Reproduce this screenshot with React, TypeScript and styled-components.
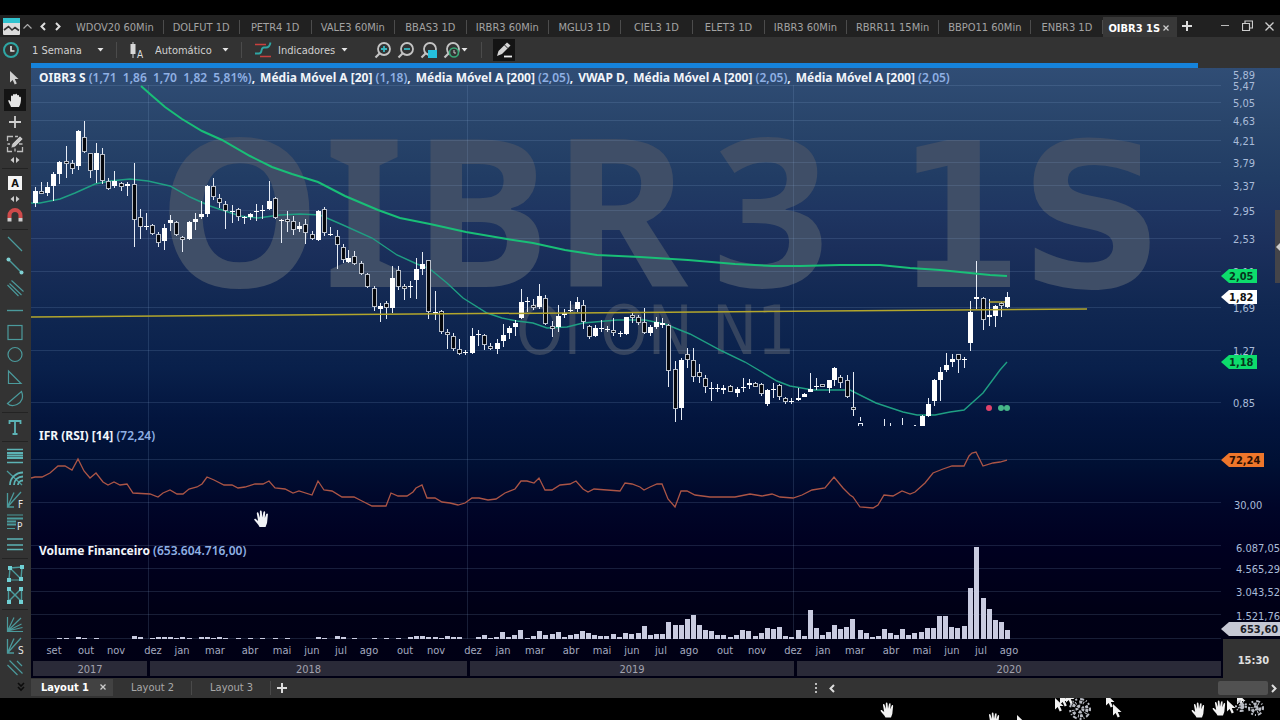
import React from "react";
import styled, { createGlobalStyle } from "styled-components";

const uiFont = `"DejaVu Sans Condensed", "DejaVu Sans", sans-serif`;
const wideFont = `"DejaVu Sans", sans-serif`;
const chartFont = `"Noto Sans", "Open Sans", sans-serif`;

const GlobalStyle = createGlobalStyle`
  * { box-sizing: border-box; }
  body { margin: 0; background: #000; font-family: ${uiFont}; font-size: 11px; color: #c8c8c8; }
  button, select { font: inherit; color: inherit; background: none; border: 0; padding: 0; margin: 0; }
  svg { display: block; }
`;

/* ---------- data ---------- */

const charts = [
  "WDOV20 60Min", "DOLFUT 1D", "PETR4 1D", "VALE3 60Min", "BBAS3 1D", "IRBR3 60Min", "MGLU3 1D",
  "CIEL3 1D", "ELET3 1D", "IRBR3 60Min", "RBRR11 15Min", "BBPO11 60Min", "ENBR3 1D",
];

const studies: [string, string][] = [
  ["OIBR3 S ", "(1,71  1,86  1,70  1,82  5,81%)"],
  ["Média Móvel A [20] ", "(1,18)"],
  ["Média Móvel A [200] ", "(2,05)"],
  ["VWAP D", ""],
  ["Média Móvel A [200] ", "(2,05)"],
  ["Média Móvel A [200] ", "(2,05)"],
];

const priceGrid = [85, 102, 120, 140, 162, 185, 210, 238, 271, 307, 350, 402];
const rsiGrid = [459, 502];
const volumeGrid = [545, 568, 591, 614, 638];
const yearGrid = [148, 467, 793];

// x, high, body top, body bottom, low, rising
type Candle = [number, number, number, number, number, 0 | 1];
const candles: Candle[] = [
  [35, 187, 191, 203, 207, 1], [41, 182, 191, 193, 194, 0], [47, 182, 187, 193, 196, 1], [53, 172, 174, 186, 201, 1],
  [59, 161, 162, 174, 184, 1], [66, 146, 161, 163, 178, 0], [72, 160, 163, 169, 174, 0], [78, 130, 131, 166, 170, 1],
  [84, 121, 137, 152, 153, 0], [90, 153, 153, 171, 178, 0], [96, 143, 153, 170, 183, 1], [102, 148, 154, 181, 184, 0],
  [108, 178, 181, 189, 190, 0], [114, 171, 181, 186, 188, 1], [121, 182, 183, 187, 191, 0], [127, 182, 184, 186, 196, 1],
  [134, 163, 184, 220, 247, 0], [140, 209, 217, 227, 239, 0], [146, 213, 226, 227, 230, 1], [152, 224, 225, 234, 235, 0],
  [158, 232, 234, 243, 247, 0], [164, 224, 228, 241, 250, 1], [170, 215, 220, 223, 231, 1], [176, 221, 222, 235, 236, 0],
  [182, 236, 237, 240, 252, 0], [189, 221, 222, 239, 240, 1], [195, 213, 219, 222, 230, 1], [201, 201, 214, 217, 219, 1],
  [207, 185, 186, 214, 217, 1], [213, 178, 186, 197, 200, 0], [219, 194, 198, 203, 208, 0], [225, 201, 204, 211, 229, 0],
  [232, 205, 211, 212, 223, 1], [238, 208, 209, 217, 221, 0], [244, 216, 217, 218, 224, 1], [250, 213, 214, 217, 220, 1],
  [256, 204, 211, 212, 221, 1], [262, 205, 210, 211, 219, 1], [269, 181, 201, 209, 210, 1], [275, 197, 198, 218, 219, 0],
  [281, 219, 220, 221, 243, 1], [287, 211, 219, 222, 232, 0], [293, 216, 221, 230, 235, 0], [299, 222, 226, 229, 232, 1],
  [305, 219, 224, 233, 244, 0], [312, 231, 234, 239, 240, 0], [318, 210, 211, 240, 241, 1], [324, 207, 209, 233, 236, 0],
  [330, 227, 234, 235, 236, 1], [337, 230, 236, 245, 269, 0], [343, 244, 247, 260, 263, 0], [348, 250, 258, 262, 263, 1],
  [354, 251, 256, 264, 265, 0], [361, 261, 263, 274, 275, 0], [367, 273, 274, 287, 288, 0], [374, 286, 288, 307, 311, 0],
  [380, 303, 306, 309, 322, 1], [386, 301, 303, 308, 319, 0], [392, 266, 278, 308, 313, 1], [398, 266, 270, 287, 290, 0],
  [404, 284, 286, 288, 300, 0], [410, 281, 286, 287, 298, 1], [416, 258, 269, 280, 299, 1], [422, 252, 264, 269, 275, 1],
  [428, 260, 260, 312, 319, 0], [435, 291, 312, 313, 320, 1], [441, 310, 311, 332, 334, 0], [447, 329, 332, 335, 349, 0],
  [453, 333, 336, 349, 351, 0], [459, 339, 349, 354, 355, 0], [465, 350, 352, 353, 355, 1], [472, 328, 336, 353, 354, 1],
  [478, 330, 334, 335, 346, 1], [484, 334, 335, 345, 350, 0], [490, 343, 346, 349, 350, 0], [497, 339, 343, 349, 354, 1],
  [503, 324, 335, 341, 347, 1], [509, 326, 328, 333, 339, 1], [515, 320, 323, 327, 336, 1], [521, 289, 302, 318, 319, 1],
  [527, 297, 301, 302, 312, 1], [533, 299, 305, 308, 310, 0], [539, 284, 296, 307, 309, 1], [545, 295, 298, 324, 325, 0],
  [552, 321, 326, 328, 337, 0], [558, 305, 316, 327, 332, 1], [564, 309, 313, 315, 318, 1], [570, 301, 310, 311, 312, 1],
  [577, 297, 302, 309, 312, 1], [583, 300, 305, 322, 329, 0], [589, 325, 326, 337, 339, 0], [595, 325, 328, 336, 337, 1],
  [601, 320, 328, 329, 332, 1], [607, 326, 329, 330, 332, 1], [613, 318, 330, 333, 336, 0], [620, 331, 333, 334, 337, 1],
  [626, 317, 317, 334, 335, 1], [632, 312, 315, 318, 323, 0], [638, 315, 317, 323, 325, 0], [644, 308, 322, 333, 334, 0],
  [650, 325, 327, 333, 336, 1], [656, 317, 322, 327, 329, 1], [662, 318, 323, 325, 328, 1], [668, 324, 325, 371, 387, 0],
  [675, 361, 369, 409, 422, 0], [681, 358, 360, 408, 420, 1], [687, 348, 354, 360, 368, 0], [693, 348, 360, 377, 382, 0],
  [699, 364, 372, 377, 383, 0], [705, 375, 378, 387, 393, 0], [711, 382, 388, 389, 401, 1], [717, 384, 388, 389, 392, 1],
  [723, 385, 388, 390, 394, 1], [730, 385, 386, 392, 392, 0], [737, 387, 389, 393, 397, 1], [743, 378, 387, 388, 392, 1],
  [749, 379, 383, 385, 389, 1], [755, 382, 383, 387, 387, 0], [761, 383, 384, 394, 396, 0], [767, 389, 390, 404, 406, 1],
  [773, 383, 389, 390, 398, 1], [779, 384, 385, 397, 400, 0], [785, 397, 398, 402, 404, 0], [791, 398, 401, 402, 404, 1],
  [798, 388, 398, 400, 401, 1], [804, 393, 394, 397, 397, 1], [810, 373, 389, 392, 392, 1], [816, 378, 386, 387, 390, 1],
  [822, 384, 384, 387, 387, 0], [829, 380, 380, 388, 393, 1], [834, 367, 368, 380, 386, 1], [840, 375, 377, 383, 388, 0],
  [847, 375, 380, 397, 398, 0], [853, 372, 407, 409, 416, 0], [922, 415, 416, 426, 426, 1], [928, 398, 404, 416, 417, 1],
  [934, 379, 380, 401, 406, 1], [940, 367, 372, 380, 401, 1], [946, 353, 365, 370, 372, 1], [952, 354, 359, 362, 367, 1],
  [958, 354, 354, 360, 373, 0], [964, 357, 359, 360, 368, 1], [970, 301, 312, 343, 351, 1], [976, 261, 297, 299, 309, 1],
  [983, 297, 298, 320, 330, 0], [989, 299, 315, 317, 326, 1], [995, 305, 306, 316, 327, 1], [1001, 302, 303, 305, 317, 0],
  [1007, 292, 297, 307, 308, 1],
];

const slowAverage =
  "141,86 150,94 165,107 182,119 202,131 222,140 250,156 272,167 292,174 318,182 345,196 378,210 400,218 430,224 466,232 507,239 533,243 565,250 597,255 640,257 688,260 735,264 773,266 800,266 840,265 880,265 910,268 940,270 970,273 990,275 1007,276";
const fastAverage =
  "31,203 40,203 60,199 75,193 95,184 110,181 130,179 148,181 170,186 190,197 210,206 225,211 240,216 258,218 280,215 300,214 320,215 343,225 372,238 397,255 417,264 430,269 447,283 463,298 487,313 502,318 517,321 533,323 547,328 567,327 583,323 617,320 645,320 665,324 690,334 722,351 745,362 777,381 790,386 813,390 850,390 876,403 903,412 917,415 935,415 950,412 964,410 983,393 1000,370 1007,362";
const rsiLine =
  "31,478 35,477 42,477 50,473 58,466 65,466 72,470 78,459 84,471 90,478 96,473 103,482 108,485 114,482 120,485 127,484 133,493 150,494 158,497 163,493 170,490 177,494 183,494 189,489 197,487 202,484 207,477 214,480 224,485 232,485 238,488 245,487 255,484 263,484 269,481 275,488 285,489 293,493 299,491 312,495 318,481 324,490 332,491 342,497 354,497 362,501 372,506 386,506 391,493 398,496 407,496 413,492 416,488 422,485 427,498 435,498 442,502 450,503 458,505 465,503 472,498 479,498 488,500 496,499 505,493 515,489 521,481 527,481 534,483 539,478 545,490 552,490 560,485 570,484 576,481 583,489 588,492 594,489 620,491 625,483 632,484 640,487 644,490 650,487 657,484 662,484 668,499 675,507 681,491 687,491 695,495 710,497 735,497 750,494 762,496 772,494 780,497 793,498 802,495 812,490 825,488 834,477 843,488 850,495 853,497 860,507 873,508 878,505 884,495 893,496 902,491 910,494 915,492 925,483 933,473 943,469 952,466 964,466 969,456 972,453 976,452 983,466 993,463 1000,462 1007,460";

// x, bar height
const volumes: [number, number][] = [
  [59, 1], [66, 1], [78, 2], [84, 1], [96, 1], [134, 3], [140, 2], [152, 1], [158, 2], [164, 2], [170, 2], [176, 1],
  [182, 2], [189, 1], [201, 2], [207, 2], [213, 1], [219, 2], [225, 1], [238, 1], [250, 1], [262, 1], [275, 1], [287, 1],
  [318, 2], [324, 1], [337, 3], [343, 2], [354, 1], [374, 1], [386, 1], [398, 1], [410, 2], [416, 3], [422, 3], [428, 2],
  [435, 2], [441, 1], [447, 3], [453, 2], [459, 2], [478, 2], [484, 4], [490, 1], [496, 2], [502, 7], [508, 2], [514, 4],
  [520, 9], [527, 1], [533, 3], [539, 8], [545, 4], [552, 5], [558, 7], [564, 2], [570, 4], [576, 5], [582, 8], [588, 6],
  [594, 4], [600, 3], [606, 3], [613, 5], [619, 2], [625, 6], [631, 5], [638, 6], [644, 13], [650, 4], [656, 5], [662, 5],
  [668, 17], [675, 14], [681, 14], [687, 20], [693, 24], [699, 14], [705, 9], [711, 8], [717, 4], [723, 4], [730, 2],
  [736, 4], [742, 9], [748, 8], [755, 3], [761, 6], [767, 11], [773, 10], [779, 12], [785, 3], [791, 2], [798, 9],
  [804, 3], [810, 29], [816, 11], [822, 4], [828, 7], [834, 14], [840, 10], [846, 12], [852, 20], [860, 9], [866, 6],
  [872, 2], [878, 3], [884, 10], [890, 6], [896, 4], [902, 10], [908, 4], [914, 6], [921, 7], [927, 11], [933, 11],
  [939, 23], [945, 23], [951, 12], [957, 11], [964, 13], [970, 51], [976, 92], [983, 41], [989, 30], [995, 19],
  [1001, 17], [1007, 9],
];

const months: [string, number][] = [
  ["set", 54], ["out", 86], ["nov", 116], ["dez", 153], ["jan", 182], ["mar", 215], ["abr", 250], ["mai", 282],
  ["jun", 312], ["jul", 341], ["ago", 369], ["out", 405], ["nov", 436], ["dez", 473], ["jan", 503], ["mar", 535],
  ["abr", 571], ["mai", 602], ["jun", 632], ["jul", 661], ["ago", 689], ["out", 725], ["nov", 757], ["dez", 793],
  ["jan", 823], ["mar", 855], ["abr", 891], ["mai", 922], ["jun", 952], ["jul", 981], ["ago", 1009],
];

const scale: [string, number, number][] = [
  ["5,89", 12, 75], ["5,47", 12, 86], ["5,05", 12, 103], ["4,63", 12, 121], ["4,21", 12, 141], ["3,79", 12, 163],
  ["3,37", 12, 186], ["2,95", 12, 211], ["2,53", 12, 239], ["2,11", 12, 272], ["1,69", 12, 308], ["1,27", 12, 351],
  ["0,85", 12, 403], ["30,00", 13, 505], ["6.087,05", 15, 548], ["4.565,29", 15, 569], ["3.043,52", 15, 592],
  ["1.521,76", 15, 616],
];

// label, centre y, tag end, fill, text colour
const tags: [string, number, number, string, string][] = [
  ["2,05", 276, 36, "#0ddc6c", "#06351c"],
  ["1,82", 297, 36, "#ffffff", "#111111"],
  ["1,18", 362, 36, "#0ddc6c", "#06351c"],
  ["72,24", 460, 43, "#ee762b", "#2a0e02"],
  ["653,60", 629, 60, "#c6c8d4", "#1c1d26"],
];

/* ---------- layout ---------- */

const Page = styled.div`
  min-height: 100vh;
  padding-top: 15px;
  display: flex;
  flex-direction: column;
  background: #000;
`;

const TitleBar = styled.header`
  display: flex;
  align-items: stretch;
  height: 22px;
  padding-left: 3px;
  background: #212121;
`;

const TitleIcons = styled.div`
  display: flex;
  align-items: center;
  width: 64px;
  flex: none;
`;

const Tabs = styled.nav`
  display: flex;
  min-width: 0;
`;

const Tab = styled.button`
  min-width: 72px;
  padding: 4px 10px 0 9px;
  color: #a3a3a3;
  white-space: nowrap;
  line-height: 16px;
  background: linear-gradient(#4c4c4c, #4c4c4c) right 5px / 1px 14px no-repeat;
`;

const ActiveTab = styled.div`
  display: flex;
  align-items: center;
  gap: 3px;
  margin: 2px 0 0;
  padding: 2px 8px 0 5px;
  background: #383838;
  color: #fff;
  font-weight: bold;
  white-space: nowrap;
`;

const IconButton = styled.button<{ $w?: number }>`
  display: flex;
  align-items: center;
  justify-content: center;
  flex: none;
  width: ${(p) => p.$w ?? 22}px;
`;

const WindowButtons = styled.div`
  display: flex;
  margin-left: auto;
`;

const Toolbar = styled.div`
  display: flex;
  align-items: center;
  height: 26px;
  background: #333;
  color: #d0d0d0;
`;

const Divider = styled.span<{ $gap?: number }>`
  width: 1px;
  height: 16px;
  flex: none;
  margin: 0 ${(p) => p.$gap ?? 12}px;
  background: #4b4b4b;
`;

const Dropdown = styled.label<{ $w: number }>`
  display: flex;
  align-items: center;
  justify-content: space-between;
  width: ${(p) => p.$w}px;
  padding-left: 10px;
  flex: none;
`;

const Select = styled.select`
  appearance: none;
  outline: 0;
  flex: 1;
  min-width: 0;
`;

const MenuButton = styled.button`
  display: flex;
  align-items: center;
  gap: 6px;
  margin-right: 23px;
`;

const Tool = styled.button<{ $on?: boolean; $h?: number }>`
  display: flex;
  align-items: center;
  justify-content: center;
  width: 22px;
  height: ${(p) => p.$h ?? 22}px;
  flex: none;
  background: ${(p) => (p.$on ? "#141414" : "none")};
`;

const Workspace = styled.div`
  display: flex;
  align-items: stretch;
`;

const Sidebar = styled.aside`
  display: flex;
  flex-direction: column;
  align-items: center;
  width: 31px;
  flex: none;
  padding: 4px 1px 0 0;
  background: #333;
`;

const SideRule = styled.hr`
  width: 26px;
  height: 1px;
  flex: none;
  margin: 3px 0;
  border: 0;
  background: #232323;
`;

const Main = styled.main`
  flex: 1;
  min-width: 0;
  display: flex;
  flex-direction: column;
  background: #333;
`;

const Strip = styled.div`
  height: 5px;
  margin-right: 82px;
  background: #1583dc;
`;

const ChartGrid = styled.section`
  display: grid;
  grid-template-columns: minmax(0, 1fr) 59px;
  background: linear-gradient(
    #304d75 0px, #28446a 60px, #213c64 110px, #1f3662 140px, #1b2f5b 180px, #112852 235px,
    #09204b 300px, #03153e 350px, #001034 395px, #000528 440px, #000020 480px, #000016 540px, #000014 610px
  );
`;

const Plot = styled.div`
  position: relative;
  min-width: 0;
`;

const Legend = styled.div<{ $top: number }>`
  position: absolute;
  left: 8px;
  top: ${(p) => p.$top}px;
  display: flex;
  font: bold 12px/16px ${chartFont};
  color: #f2f5fa;
  white-space: pre;
`;

const StudyName = styled.span``;

const StudyValue = styled.span`
  color: #8fb0e4;
  font-weight: 600;
`;

const Comma = styled.span`
  margin-right: 5px;
`;

const Years = styled.div`
  display: flex;
  gap: 3px;
  margin-left: 2px;
  padding-bottom: 2px;
`;

const Year = styled.div<{ $w?: number }>`
  flex: ${(p) => (p.$w ? `0 0 ${p.$w}px` : "1 1 0")};
  min-width: 0;
  height: 15px;
  line-height: 17px;
  text-align: center;
  background: #2a2a38;
  color: #a2a2ae;
`;

const Clock = styled.div`
  display: flex;
  align-items: center;
  justify-content: center;
  margin-left: 2px;
  padding: 3px 0 0 4px;
  background: #333;
  color: #e0e0e0;
  font-weight: bold;
`;

const BottomBar = styled.footer`
  display: flex;
  align-items: center;
  height: 20px;
  background: #333;
`;

const LayoutTab = styled.button`
  padding: 0 17px 0 18px;
  line-height: 14px;
  color: #a8a8a8;
  border-right: 1px solid #4a4a4a;
`;

const ActiveLayout = styled.div`
  display: flex;
  align-items: center;
  gap: 9px;
  height: 17px;
  margin-bottom: 2px;
  padding: 0 6px 0 10px;
  background: #424242;
  color: #fff;
  font-weight: bold;
`;

const ScrollArea = styled.div`
  display: flex;
  align-items: center;
  margin-left: auto;
  width: 466px;
`;

const Track = styled.div`
  flex: 1;
  display: flex;
  justify-content: flex-end;
`;

const Thumb = styled.div`
  width: 50px;
  height: 14px;
  border-radius: 2px;
  background: #515151;
`;

const Desktop = styled.div`
  display: flex;
  justify-content: flex-end;
  height: 22px;
  overflow: hidden;
`;

/* ---------- icons ---------- */

const teal = "#4b9a9c";

const Glyph = ({ children, w = 18, h = 18 }: { children: React.ReactNode; w?: number; h?: number }) => (
  <svg width={w} height={h} viewBox={`0 0 ${w} ${h}`} fill="none" aria-hidden="true">{children}</svg>
);

const Caret = () => <Glyph w={7} h={4}><path d="M0.5 0h6L3.500 3.500z" fill="#e4e4e4" /></Glyph>;
const Plus = () => <Glyph w={12} h={12}><path d="M6 1v10M1 6h10" stroke="#ddd" strokeWidth="2" /></Glyph>;
const Close = ({ size = 6 }: { size?: number }) => (
  <Glyph w={size} h={size}><path d={`M0.5 0.5L${size - 0.5} ${size - 0.5}M${size - 0.5} 0.5L0.5 ${size - 0.5}`} stroke="#ccc" strokeWidth="1.300" /></Glyph>
);
const Chevron = ({ right }: { right?: boolean }) => (
  <Glyph w={6} h={9}><path d={right ? "M1 1l3.500 3.500L1 8" : "M5 1L1.500 4.500 5 8"} stroke="#ddd" strokeWidth="2" /></Glyph>
);

const handPath =
  "M5.500 15.500C4.500 13 2 11 .8 9.200c-.6-1 .6-1.600 1.500-.8l1.900 1.700L3 3.200c-.2-1.300 1.300-1.600 1.600-.3L5.900 7 5.800 1.500c0-1.300 1.600-1.300 1.700 0L8 6.800 9 2c.3-1.300 1.800-1 1.600.3L10.300 7.200l1.300-3.500c.5-1.100 1.800-.6 1.500.5L12.500 10c0 2.500-1 3.500-1.500 5.500z";
const arrowPath = "M0 0v11.500l2.700-2.600 2 4.600 2.100-.9-2-4.500h3.700z";

const Lens = ({ children }: { children: React.ReactNode }) => (
  <Glyph w={18} h={18}>
    <circle cx="10" cy="8" r="6" stroke="#c4c4c4" strokeWidth="1.800" />
    <path d="M5.500 12.500L1.500 16.500" stroke="#c4c4c4" strokeWidth="2.200" />
    {children}
  </Glyph>
);

const Node = ({ x, y }: { x: number; y: number }) => <rect x={x - 2} y={y - 2} width="4" height="4" fill="#6fd0d4" />;
const Fan = ({ letter }: { letter: string }) => (
  <Glyph>
    <path d="M1.500 2v14H8M1.500 16L15 1M1.500 16L8 1.500" stroke={teal} strokeWidth="1.300" />
    <text x="12" y="17" fontSize="10" fill="#e4e4e4">{letter}</text>
  </Glyph>
);

const Arrows = () => <Glyph w={10} h={6}><path d="M4 0v6L.5 3zM6 0v6l3.500-3z" fill="#ccc" /></Glyph>;

/* ---------- parts ---------- */

function SideTools() {
  return (
    <Sidebar>
      <Tool aria-label="Cursor"><Glyph w={10} h={16}><path d={arrowPath} transform="translate(0 1)" fill="#d0d0d0" /></Glyph></Tool>
      <Tool $on aria-label="Mover"><Glyph w={14} h={16}>
        <path d="M3 15C2.500 13 .8 11 .3 9c-.2-1.200 1-1.400 1.700-.3L3 9.800V4.300c0-1.200 1.700-1.200 1.800 0l.2-1.500c.2-1.200 1.900-1.200 1.900 0l.3-.4c.4-1 1.900-.8 1.900.4l.3.600c.6-.7 1.700-.3 1.700.8l.1 1c.7-.7 1.800-.3 1.800.9C13 10 12.500 12.500 11 15z" fill="#e6e6e6" />
      </Glyph></Tool>
      <Tool aria-label="Cruz"><Glyph w={14} h={14}><path d="M7 1v12M1 7h12" stroke="#d0d0d0" strokeWidth="1.800" /></Glyph></Tool>
      <Tool aria-label="Editar"><Glyph>
        <path d="M1.500 6V1.500H7M1.500 12v4.500H6M11 16.500h5.500V12M9 1.500h3M1.500 9H4M9 16.500v-3M16.500 9H13" stroke="#bdbdbd" strokeWidth="1.300" />
        <path d="M5 13l1-4 8-8 3 3-8 8z" fill="#c9c9c9" stroke="#333" strokeWidth=".6" />
      </Glyph></Tool>
      <Tool $h={10} aria-label="Mais opções de edição"><Arrows /></Tool>
      <SideRule />
      <Tool aria-label="Texto"><Glyph w={16} h={16}>
        <rect x="1" y="1" width="14" height="14" fill="#f4f4f4" />
        <text x="8" y="12" fontSize="11" fontWeight="bold" textAnchor="middle" fill="#111">A</text>
      </Glyph></Tool>
      <Tool $h={10} aria-label="Mais opções de texto"><Arrows /></Tool>
      <Tool aria-label="Ímã"><Glyph w={16} h={14}>
        <path d="M2.500 10V7.500a5.500 5.500 0 0 1 11 0V10" stroke="#cf4a4a" strokeWidth="4" />
        <path d="M.5 10h4v3.500h-4zM11.500 10h4v3.500h-4z" fill="#ccc" />
      </Glyph></Tool>
      <SideRule />
      <Tool aria-label="Reta"><Glyph><path d="M2 2l14 14" stroke={teal} strokeWidth="1.300" /></Glyph></Tool>
      <Tool aria-label="Segmento"><Glyph>
        <path d="M2.500 2.500l13 13" stroke={teal} strokeWidth="1.400" />
        <circle cx="2.500" cy="2.500" r="2" fill="#7fd0d2" /><circle cx="15.500" cy="15.500" r="2" fill="#7fd0d2" />
      </Glyph></Tool>
      <Tool aria-label="Canal"><Glyph><path d="M1.500 6l11 11M5.500 1.500l12 11M3.500 4.500l12 11.500" stroke={teal} strokeWidth="1.100" /></Glyph></Tool>
      <Tool aria-label="Linha horizontal"><Glyph><path d="M1 9.500h16" stroke={teal} strokeWidth="1.400" /></Glyph></Tool>
      <Tool aria-label="Retângulo"><Glyph><rect x="2" y="2.500" width="14" height="14" stroke={teal} strokeWidth="1.200" /></Glyph></Tool>
      <Tool aria-label="Elipse"><Glyph><circle cx="9" cy="9.500" r="7" stroke={teal} strokeWidth="1.200" /></Glyph></Tool>
      <Tool aria-label="Triângulo"><Glyph><path d="M2.500 4v12.500H15z" stroke={teal} strokeWidth="1.200" /></Glyph></Tool>
      <Tool aria-label="Arco"><Glyph><path d="M1.500 14.500L15.500 2.500c2.500 6 0 11-4.500 13-3.500 1.500-7 1.500-9.500-1z" stroke={teal} strokeWidth="1.200" /></Glyph></Tool>
      <SideRule />
      <Tool aria-label="Inserir texto"><Glyph><path d="M3.500 6V3h11v3M9 3v13M6.500 16h5" stroke="#5cb3b5" strokeWidth="1.800" /></Glyph></Tool>
      <SideRule />
      <Tool aria-label="Retração"><Glyph><path d="M1 2.500h16M1 15.500h16" stroke="#5cb3b5" strokeWidth="1.300" /><path d="M1 6h16M1 8.500h16M1 11h16" stroke="#5cb3b5" strokeWidth="1.800" /></Glyph></Tool>
      <Tool aria-label="Arcos"><Glyph>
        <path d="M1 2l15 14" stroke={teal} strokeWidth="1.200" />
        <path d="M4 16C4 9 10 3.500 17 3.500M8 16c0-5 4-8.500 9-8.500M12 16c0-2.500 2-4.500 5-4.500" stroke="#5cb3b5" strokeWidth="1.800" />
      </Glyph></Tool>
      <Tool aria-label="Leque F"><Fan letter="F" /></Tool>
      <Tool aria-label="Projeção P"><Glyph>
        <path d="M1 2h16M1 15.500h8" stroke={teal} strokeWidth="1.200" /><path d="M1 5.500h16M1 8.500h9M1 11.500h9" stroke={teal} strokeWidth="1.800" />
        <text x="11" y="17" fontSize="10" fill="#e4e4e4">P</text>
      </Glyph></Tool>
      <Tool aria-label="Zonas"><Glyph><path d="M1 4h16M1 10h16M1 14.500h16" stroke="#5cb3b5" strokeWidth="1.300" /></Glyph></Tool>
      <SideRule />
      <Tool aria-label="Padrão ABCD"><Glyph><path d="M3 16L4 4l11 11 1-12L4 4" stroke={teal} strokeWidth="1.400" /><path d="M3 16h12" stroke={teal} /><Node x={3} y={16} /><Node x={4} y={4} /><Node x={15} y={15} /><Node x={16} y={3} /></Glyph></Tool>
      <Tool aria-label="Padrão XABCD"><Glyph><path d="M2.500 16V2.500l13 13V2.500l-13 13" stroke={teal} strokeWidth="1.400" /><Node x={3} y={16} /><Node x={3} y={3} /><Node x={15} y={16} /><Node x={15} y={3} /></Glyph></Tool>
      <SideRule />
      <Tool aria-label="Leque de Gann"><Glyph><path d="M1.500 2v14.500H17M1.500 16L15 3M1.500 16L8 2.500M1.500 16l14-7M1.500 16l15-3.500" stroke={teal} strokeWidth="1.200" /></Glyph></Tool>
      <Tool aria-label="Leque S"><Fan letter="S" /></Tool>
      <Tool aria-label="Linhas paralelas"><Glyph><path d="M1.500 6l10 10M3.500 1.500l13 13M11 2l5 5" stroke={teal} strokeWidth="1.200" /></Glyph></Tool>
      <Tool $h={16} aria-label="Mais ferramentas"><Glyph w={22} h={10}><path d="M14 1l3 3 3-3M14 5l3 3 3-3" stroke="#0c0c0c" strokeWidth="1.600" /></Glyph></Tool>
    </Sidebar>
  );
}

function PricePlot() {
  return (
    <svg width="100%" height="571" aria-label="Gráfico OIBR3 semanal">
      <g transform="translate(-31 -68)">
        <g fill="#3f4e67">
          <text y="287" fontSize="206" fontWeight="bold" fontFamily={chartFont}>
            <tspan x="158">O</tspan><tspan x="324">I</tspan><tspan x="413">B</tspan><tspan x="553">R</tspan>
            <tspan x="712">3</tspan> <tspan x="896" fontFamily={uiFont} fontSize="202">1</tspan><tspan x="1019" fontFamily={wideFont} fontSize="202">S</tspan>
          </text>
          <text x="516" y="354" fontSize="67" fill="#35445f" fontFamily={uiFont}>OI ON N1</text>
        </g>
        <g fill="#8fb0dc" fillOpacity="0.17">
          {[...priceGrid, ...rsiGrid, ...volumeGrid].map((y) => <rect key={y} x="31" y={y} width="100%" height="1" />)}
          {yearGrid.map((x) => <rect key={x} x={x} y="85" width="1" height="554" />)}
        </g>
        <polyline points={fastAverage} fill="none" stroke="#1f9f83" strokeWidth="1.400" />
        <g shapeRendering="crispEdges">
          {candles.map(([x, high, top, bottom, low, rising]) => (
            <g key={x}>
              <rect x={x - 0.5} y={high} width="1" height={low - high} fill="#e6ecf6" />
              {rising ? (
                <rect x={x - 2.5} y={top} width="5" height={bottom - top} fill="#fff" />
              ) : (
                <rect x={x - 2} y={top + 0.5} width="4" height={Math.max(bottom - top - 1, 2)} fill="#05070c" stroke="#b9bfc9" />
              )}
            </g>
          ))}
          <path d="M884.500 419v7M902.500 418v7M890.500 423v3M914 425h2M860.500 417v4M858.500 426v-3h4v3" stroke="#e6ecf6" fill="none" />
        </g>
        <path d="M31 317L1087 309" stroke="#b3a62c" strokeWidth="1.500" />
        <path d="M989 302h16" stroke="#c9b52b" strokeWidth="1.300" />
        <polyline points={slowAverage} fill="none" stroke="#19bf77" strokeWidth="2" />
        <circle cx="989" cy="408" r="3" fill="#e0426a" />
        <circle cx="1001" cy="408" r="3" fill="#46b688" />
        <circle cx="1007" cy="408" r="3" fill="#46b688" />
        <polyline points={rsiLine} fill="none" stroke="#ab5546" strokeWidth="1.300" />
        <g fill="#c9cbe0" shapeRendering="crispEdges">
          {volumes.map(([x, h]) => <rect key={x} x={x - 2.5} y={639 - h} width="5" height={h} />)}
        </g>
        <path d={handPath} transform="translate(253.500 510) scale(1.100)" fill="#f0f2f6" />
      </g>
    </svg>
  );
}

function PriceScale() {
  return (
    <svg width="59" height="571" aria-label="Escala de preços">
      <g transform="translate(0 -68)" fontFamily={uiFont} fontSize="11">
        <g fill="#a9bbd8">
          {scale.map(([label, x, y]) => <text key={label} x={x} y={y + 4}>{label}</text>)}
        </g>
        {tags.map(([label, y, end, fill, ink]) => (
          <g key={label}>
            <path d={`M0 ${y}L8 ${y - 7}H${end}v14H8z`} fill={fill} />
            <text x={end === 60 ? 19 : 8} y={y + 4} fontWeight="bold" fill={ink}>{label}</text>
          </g>
        ))}
        <rect x="54" y="210" width="5" height="73" fill="#444449" />
        <path d="M59 243v8l-4-4z" fill="#ccc" />
      </g>
    </svg>
  );
}

const Cluster = ({ x, y, r }: { x: number; y: number; r: number }) => (
  <g transform={`translate(${x} ${y})`} fill="none" stroke="#b9bcc4">
    <circle r={r} strokeWidth="2" strokeDasharray="2 3 4 2 1 2" />
    <circle r={r - 3} strokeWidth="3" strokeDasharray="3 1 1 3" />
    <circle r={Math.max(r - 7, 1)} strokeWidth="3" strokeDasharray="2 1 3 2" />
  </g>
);

export default function App() {
  return (
    <Page>
      <GlobalStyle />
      <TitleBar>
        <TitleIcons>
          <Glyph w={17} h={17}>
            <rect width="17" height="17" rx="1" fill="#dcdcdc" /><rect width="17" height="5" fill="#31c3cf" />
            <path d="M1 12l4.500-3.500L9 12l3-2.500 4 3" stroke="#333" strokeWidth="1.600" />
          </Glyph>
          <IconButton $w={15} aria-label="Recolher"><Glyph w={9} h={5}><path d="M.5 4.500l4-4 4 4" stroke="#aaa" strokeWidth="1.200" /></Glyph></IconButton>
          <IconButton $w={15} aria-label="Anterior"><Chevron /></IconButton>
          <IconButton $w={15} aria-label="Próximo"><Chevron right /></IconButton>
        </TitleIcons>
        <Tabs aria-label="Gráficos abertos">
          {charts.map((name, i) => <Tab key={i}>{name}</Tab>)}
          <ActiveTab>OIBR3 1S<IconButton $w={6} aria-label="Fechar gráfico"><Close /></IconButton></ActiveTab>
        </Tabs>
        <IconButton $w={20} aria-label="Novo gráfico"><Plus /></IconButton>
        <WindowButtons>
          <IconButton aria-label="Minimizar"><Glyph w={8} h={8}><path d="M0 3.500h8" stroke="#bbb" /></Glyph></IconButton>
          <IconButton aria-label="Restaurar"><Glyph w={11} h={12}><path d="M.5 3.500h7v7h-7zM3 3V1h7.500v7H8" stroke="#ccc" strokeWidth="1.200" /></Glyph></IconButton>
          <IconButton aria-label="Fechar"><Close size={9} /></IconButton>
        </WindowButtons>
      </TitleBar>

      <Toolbar>
        <IconButton aria-label="Periodicidade"><Glyph>
          <circle cx="9" cy="9" r="7" stroke="#2fa6a4" strokeWidth="2" /><path d="M9 5v5h3.500" stroke="#e8e8e8" strokeWidth="1.600" />
        </Glyph></IconButton>
        <Dropdown $w={82}>
          <Select aria-label="Período" defaultValue="1 Semana"><option>1 Semana</option><option>1 Dia</option></Select>
          <Caret />
        </Dropdown>
        <Divider />
        <IconButton $w={16} aria-label="Tipo de candle"><Glyph w={16} h={18}>
          <path d="M4 1v16" stroke="#d8d8d8" /><rect x="1.500" y="3" width="5" height="10" fill="#d8d8d8" />
          <text x="8" y="17" fontSize="10" fill="#ddd">A</text>
        </Glyph></IconButton>
        <Dropdown $w={84}>
          <Select aria-label="Escala" defaultValue="Automático"><option>Automático</option><option>Manual</option></Select>
          <Caret />
        </Dropdown>
        <Divider />
        <MenuButton aria-haspopup="menu">
          <Glyph w={18} h={18}>
            <path d="M1 3.500h11M6 15.500h11" stroke="#c8403e" strokeWidth="1.600" />
            <path d="M1 12.500h4c4 0 1-6 5-6h2c3 0 4-2 4.500-5" stroke="#2fa6a4" strokeWidth="1.800" />
          </Glyph>
          Indicadores
          <Caret />
        </MenuButton>
        <IconButton $w={23} aria-label="Ampliar"><Lens><path d="M10 5v6M7 8h6" stroke="#35b5c0" strokeWidth="1.800" /></Lens></IconButton>
        <IconButton $w={23} aria-label="Reduzir"><Lens><path d="M7 8h6" stroke="#35b5c0" strokeWidth="1.800" /></Lens></IconButton>
        <IconButton $w={23} aria-label="Ampliar área"><Lens><rect x="8" y="9" width="9" height="8" fill="#25bfdc" /></Lens></IconButton>
        <IconButton $w={30} aria-label="Ampliar período"><Lens><circle cx="11" cy="11.500" r="4.500" fill="#333" stroke="#39a878" strokeWidth="1.600" /><path d="M11 9v3h2" stroke="#ccc" /></Lens><Caret /></IconButton>
        <Divider $gap={11} />
        <Tool $on aria-label="Desenhar"><Glyph>
          <path d="M2 15l1.500-5L12 1.500l3.500 3L7 13z" fill="#d4d4d4" /><path d="M9.500 4l3.500 3.500" stroke="#222" /><path d="M9 15.500h8" stroke="#eee" strokeWidth="1.800" />
        </Glyph></Tool>
      </Toolbar>

      <Workspace>
        <SideTools />
        <Main>
          <Strip />
          <ChartGrid>
            <Plot>
              <PricePlot />
              <Legend $top={2}>
                {studies.map(([name, value], i) => (
                  <React.Fragment key={i}>
                    <StudyName>{name}</StudyName>
                    {value && <StudyValue>{value}</StudyValue>}
                    {i < studies.length - 1 && <Comma>,</Comma>}
                  </React.Fragment>
                ))}
              </Legend>
              <Legend $top={360}><StudyName>IFR (RSI) [14] </StudyName><StudyValue>(72,24)</StudyValue></Legend>
              <Legend $top={475}><StudyName>Volume Financeiro </StudyName><StudyValue>(653.604.716,00)</StudyValue></Legend>
            </Plot>
            <PriceScale />
            <div>
              <svg width="100%" height="22" aria-label="Meses">
                <g fill="#a4abc0" fontSize="11" fontFamily={uiFont} textAnchor="middle">
                  {months.map(([label, x]) => <text key={x} x={x - 31} y="15">{label}</text>)}
                </g>
              </svg>
              <Years>
                <Year $w={114}>2017</Year><Year $w={317}>2018</Year><Year $w={324}>2019</Year><Year>2020</Year>
              </Years>
            </div>
            <Clock>15:30</Clock>
          </ChartGrid>
          <BottomBar>
            <ActiveLayout>Layout 1<IconButton $w={9} aria-label="Fechar layout"><Close /></IconButton></ActiveLayout>
            <LayoutTab>Layout 2</LayoutTab>
            <LayoutTab>Layout 3</LayoutTab>
            <IconButton aria-label="Novo layout"><Plus /></IconButton>
            <ScrollArea>
              <Glyph w={4} h={11}><path d="M1 0v2h2V0zM1 4v2h2V4zM1 8v2h2V8z" fill="#bbb" /></Glyph>
              <IconButton $w={28} aria-label="Rolar para a esquerda"><Chevron /></IconButton>
              <Track><Thumb /></Track>
              <IconButton $w={12} aria-label="Rolar para a direita"><Chevron right /></IconButton>
            </ScrollArea>
          </BottomBar>
        </Main>
      </Workspace>

      <Desktop>
        <svg width="400" height="22" aria-hidden="true" fill="#f2f2f2">
          <path d={handPath} transform="translate(0 4)" />
          <path d={handPath} transform="translate(106 14)" />
          <path d={handPath} transform="translate(311 4)" />
          <path d={handPath} transform="translate(332 2)" />
          <path d={arrowPath} transform="translate(137 17)" />
          <path d={arrowPath} transform="translate(175 0)" />
          <path d={arrowPath} transform="translate(180 -5)" />
          <path d={arrowPath} transform="translate(186 -7)" />
          <path d={arrowPath} transform="translate(226 -4)" />
          <path d={arrowPath} transform="translate(233 6)" />
          <path d={arrowPath} transform="translate(347 2)" />
          <path d={arrowPath} transform="translate(357 -5)" />
          <Cluster x={200} y={11} r={10} />
          <Cluster x={361} y={8} r={5} />
          <Cluster x={376} y={10} r={7} />
        </svg>
      </Desktop>
    </Page>
  );
}
